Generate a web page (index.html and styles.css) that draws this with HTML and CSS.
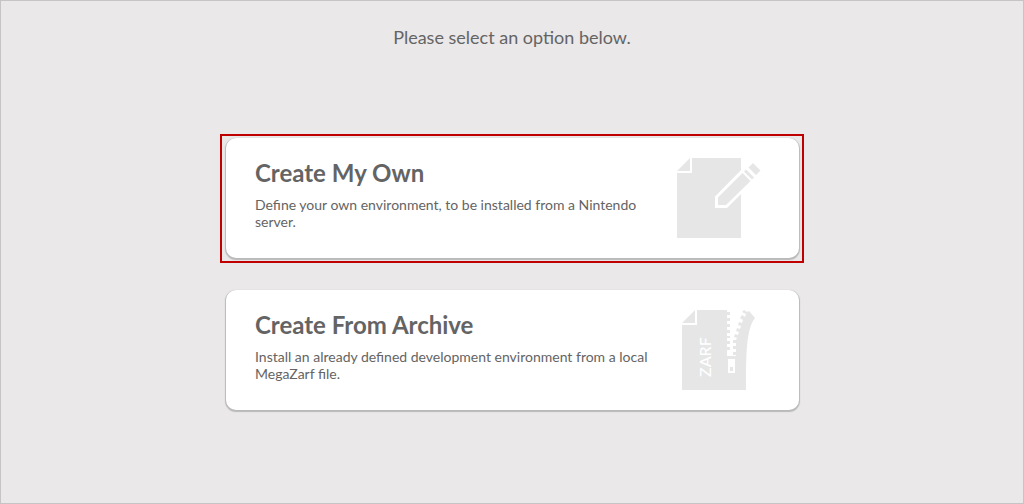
FILE: index.html
```html
<!DOCTYPE html>
<html lang="en">
<head>
<meta charset="utf-8">
<title>Create Environment</title>
<link rel="stylesheet" href="styles.css">
</head>
<body>
<main class="page">
  <h1 class="prompt">Please select an option below.</h1>
  <div class="options">
    <div class="option selected">
      <button class="card" type="button">
        <span class="copy">
          <span class="title">Create My Own</span>
          <span class="description">Define your own environment, to be installed from a Nintendo server.</span>
        </span>
        <svg class="icon" viewBox="0 0 84 80" aria-hidden="true">
          <path class="ink" d="M15 0H64V80H0V15H15Z M0 13L13 0V13Z"/>
          <path class="paper" d="M38 38.500L68 8L80 20L50 50H38Z"/>
          <path class="ink" d="M41 39.500L65.500 15L73.500 23L49 47H41Z M67 13.500L69 11.500L77 19.500L75 21.500Z M71.500 9.500L76 5L83.500 12.500L79 17Z"/>
        </svg>
      </button>
    </div>
    <div class="option">
      <button class="card" type="button">
        <span class="copy">
          <span class="title">Create From Archive</span>
          <span class="description">Install an already defined development environment from a local MegaZarf file.</span>
        </span>
        <svg class="icon archive" viewBox="0 0 84 80" aria-hidden="true">
          <path class="ink" d="M15 0H45V2H48V5H45V8H48V11H45V14H48V17H45V20H48V23H45V26H48V28H45V31H48V34H45V37H48V40H45V43H48V45H51V42H54V39H51V36H54V33H51V30H54L55 28L52 27L53 24L56 25L57 22L54 21L55 18L58 19L59 16L56 15L57 12L60 13L61 10L58 8L60 5L63 7L64 4L60 2L62 0L65 2L67 1L73 8C64 19 64 46 64 80H0V15H15Z M0 13L13 0V13Z"/>
          <path class="paper" d="M45 43H48V45H54V46H45Z M46 49H53V63H46Z"/>
          <path class="ink" d="M48 57H51V61H48Z"/>
          <text class="label" x="-67" y="29">ZARF</text>
        </svg>
      </button>
    </div>
  </div>
</main>
</body>
</html>
```
FILE: styles.css
```css
* {
  box-sizing: border-box;
}

body {
  margin: 0;
  background: #eae8e9;
  color: #646464;
  font-family: Lato, sans-serif;
}

.page {
  min-height: 100vh;
  padding: 24px;
  border: 1px solid #c6c4c5;
}

.prompt {
  margin: 0 0 85px;
  font-size: 18px;
  font-weight: 400;
  line-height: 24px;
  text-align: center;
}

.options {
  display: flex;
  flex-direction: column;
  gap: 23px;
  max-width: 584px;
  margin: 0 auto;
}

.option {
  padding: 2px 3px 3px 4px;
  border: 2px solid transparent;
}

.selected {
  border-color: #c00000;
}

.card {
  display: flex;
  align-items: flex-start;
  justify-content: space-between;
  width: 100%;
  min-height: 120px;
  padding: 20px 38px 20px 29px;
  border: 0;
  border-radius: 10px;
  background: #fff;
  box-shadow: 0 1px 1px 1px #b9b9b9;
  color: inherit;
  font: inherit;
  text-align: left;
  cursor: pointer;
}

.copy {
  flex: 0 1 400px;
}

.title,
.description {
  display: block;
}

.title {
  margin-bottom: 8px;
  font-size: 24px;
  font-weight: 700;
  line-height: 30px;
}

.description {
  font-size: 14px;
  line-height: 17px;
}

.icon {
  flex: none;
  width: 84px;
  height: 80px;
}

.archive {
  margin-right: -5px;
}

.ink {
  fill: #e6e6e6;
}

.paper,
.label {
  fill: #fff;
}

.label {
  font-size: 16px;
  font-weight: 500;
  transform: rotate(-90deg);
}
```
